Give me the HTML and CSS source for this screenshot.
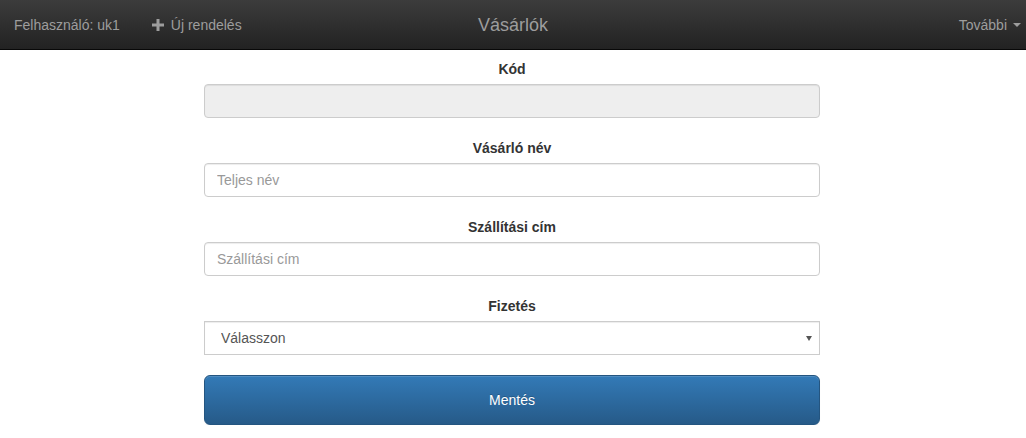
FILE: index.html
```html
<!DOCTYPE html>
<html lang="hu">
<head>
<meta charset="utf-8">
<title>Vásárlók</title>
<link rel="stylesheet" href="styles.css">
</head>
<body>
<nav class="navbar">
  <div class="nav-left">
    <span class="nav-item user">Felhasználó: uk1</span>
    <span class="nav-item new">
      <svg class="plus" width="12" height="12" viewBox="0 0 12 12"><path d="M4.5 0h3v4.5H12v3H7.5V12h-3V7.5H0v-3h4.5z" fill="#9d9d9d"/></svg>Új rendelés
    </span>
  </div>
  <div class="nav-title">Vásárlók</div>
  <div class="nav-right">
    <span class="nav-item more">További<span class="caret"></span></span>
  </div>
</nav>
<main class="page">
  <form class="form">
    <div class="group">
      <label class="label">Kód</label>
      <input class="control" type="text" disabled>
    </div>
    <div class="group">
      <label class="label">Vásárló név</label>
      <input class="control" type="text" placeholder="Teljes név">
    </div>
    <div class="group">
      <label class="label">Szállítási cím</label>
      <input class="control" type="text" placeholder="Szállítási cím">
    </div>
    <div class="group">
      <label class="label">Fizetés</label>
      <div class="select-wrap">
        <select class="control select">
          <option>Válasszon</option>
        </select>
      </div>
    </div>
    <button class="btn" type="button">Mentés</button>
  </form>
</main>
</body>
</html>
```
FILE: styles.css
```css
* { box-sizing: border-box; }
html, body { margin: 0; padding: 0; background: #fff; }
body {
  font-family: "Liberation Sans", Arial, Helvetica, sans-serif;
  font-size: 14px;
  line-height: 20px;
  color: #333;
}
.navbar {
  height: 50px;
  display: grid;
  grid-template-columns: 1fr auto 1fr;
  align-items: center;
  background: linear-gradient(to bottom, #3c3c3c 0%, #222 100%);
  border-bottom: 1px solid #080808;
  color: #9d9d9d;
}
.nav-left { display: flex; align-items: center; padding-left: 14px; }
.nav-item { color: #9d9d9d; white-space: nowrap; }
.user { margin-right: 32px; }
.new { display: flex; align-items: center; }
.plus { margin-right: 7px; }
.nav-title { font-size: 18px; line-height: 20px; color: #9d9d9d; }
.nav-right { display: flex; justify-content: flex-end; padding-right: 5px; }
.more { display: flex; align-items: center; }
.caret {
  display: inline-block;
  width: 0; height: 0;
  margin-left: 6px;
  border-top: 4px solid #9d9d9d;
  border-left: 4px solid transparent;
  border-right: 4px solid transparent;
}
.page { padding: 9px 206px 0 204px; }
.form { display: flex; flex-direction: column; }
.group { display: flex; flex-direction: column; margin-bottom: 20px; }
.label { display: block; text-align: center; font-weight: bold; margin-bottom: 5px; line-height: 20px; }
.control {
  display: block;
  width: 100%;
  height: 34px;
  padding: 6px 12px;
  font-family: inherit;
  font-size: 14px;
  line-height: 20px;
  color: #555;
  background: #fff;
  border: 1px solid #ccc;
  border-radius: 4px;
  box-shadow: inset 0 1px 1px rgba(0,0,0,.075);
  outline: none;
}
.control::placeholder { color: #999; }
.control:disabled { background: #eee; }
.select-wrap { position: relative; }
.select {
  appearance: none;
  -webkit-appearance: none;
  padding-left: 16px;
  border-radius: 0;
}
.select-wrap::after {
  content: "";
  position: absolute;
  right: 8px;
  top: 15px;
  width: 0; height: 0;
  border-top: 5px solid #555;
  border-left: 3px solid transparent;
  border-right: 3px solid transparent;
}
.btn {
  display: block;
  width: 100%;
  height: 50px;
  font-family: inherit;
  font-size: 14px;
  color: #fff;
  background: linear-gradient(to bottom, #337ab7 0%, #265a88 100%);
  border: 1px solid #245580;
  border-radius: 6px;
  box-shadow: inset 0 1px 0 rgba(255,255,255,.15), 0 1px 1px rgba(0,0,0,.075);
  text-shadow: 0 -1px 0 rgba(0,0,0,.2);
  cursor: pointer;
}
```
